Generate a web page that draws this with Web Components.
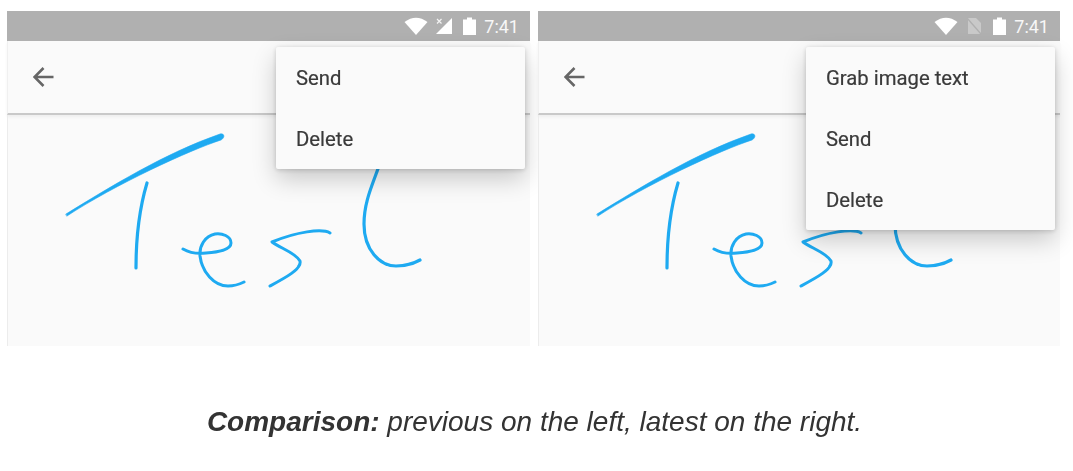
<!DOCTYPE html>
<html>
<head>
<meta charset="utf-8">
<title>Comparison</title>
<style>
  html, body { margin: 0; padding: 0; background: #fff; }
  body { width: 1073px; height: 471px; overflow: hidden; font-family: "Liberation Sans", Arial, sans-serif; }
</style>
</head>
<body>
<compare-page>
  <note-phone width="523">
    <note-menu>
      <note-item>Send</note-item>
      <note-item>Delete</note-item>
    </note-menu>
  </note-phone>
  <note-phone width="522" sim="none">
    <note-menu>
      <note-item>Grab image text</note-item>
      <note-item>Send</note-item>
      <note-item>Delete</note-item>
    </note-menu>
  </note-phone>
  <span slot="caption"><b>Comparison:</b> previous on the left, latest on the right.</span>
</compare-page>

<script>
class ComparePage extends HTMLElement {
  constructor() {
    super();
    this.attachShadow({ mode: 'open' });
    this.shadowRoot.innerHTML = `
      <style>
        :host { display: block; padding: 11px 0 0 7px; }
        .row { display: flex; gap: 8px; }
        .caption {
          margin-top: 58px;
          padding-right: 11px;
          text-align: center;
          font: italic 28px/36px "Liberation Sans", Arial, sans-serif;
          color: #333;
          filter: blur(.25px);
        }
      </style>
      <div class="row"><slot></slot></div>
      <div class="caption"><slot name="caption"></slot></div>
    `;
  }
}

const signalIcons = {
  x: `<svg width="18" height="18" viewBox="0 0 18 18">
        <path d="M1 17 L17 1 V17 Z" fill="#fff"/>
        <path d="M1 1 L7 7 M7 1 L1 7" stroke="#b0b0b0" stroke-width="4"/>
        <path d="M2 2 L6.5 6.5 M6.5 2 L2 6.5" stroke="#f4f4f4" stroke-width="1.2"/>
      </svg>`,
  none: `<svg width="18" height="18" viewBox="0 0 18 18">
        <path d="M3 1 H11 L16 6 V17 H3 Z" fill="#fff" opacity=".32"/>
        <path d="M2 1 L16 17" stroke="#b0b0b0" stroke-width="1.4"/>
      </svg>`
};

class NotePhone extends HTMLElement {
  constructor() {
    super();
    this.attachShadow({ mode: 'open' });
    const sim = this.getAttribute('sim') === 'none' ? 'none' : 'x';
    this.shadowRoot.innerHTML = `
      <style>
        :host {
          display: block;
          position: relative;
          width: ${this.getAttribute('width')}px;
          height: 335px;
          background: #fafafa;
          font-family: Roboto, "Liberation Sans", sans-serif;
          filter: blur(.55px);
        }
        .status {
          height: 30px;
          background: #b0b0b0;
          display: flex;
          align-items: center;
          justify-content: flex-end;
          padding-right: 11px;
          color: #f7f7f7;
          font-size: 18px;
        }
        .status svg { display: block; }
        .wifi { margin-right: 7px; }
        .sim { margin-right: 10px; }
        .battery { margin-right: 8px; }
        .bar {
          height: 74px;
          display: flex;
          align-items: center;
          padding-left: 25px;
          border-bottom: 2px solid #c9c9c9;
          box-shadow: 0 2px 3px rgba(0,0,0,.05);
          box-sizing: border-box;
          background: #fafafa;
          border-left: 1px solid #f0f0f0;
        }
        .canvas {
          height: 231px;
          border-left: 1px solid #ececec;
          box-sizing: border-box;
        }
        .canvas svg { display: block; }
      </style>
      <div class="status">
        <svg class="wifi" width="24" height="18" viewBox="0 0 24 18"><path d="M0.5 5 Q12 -3.5 23.5 5 L12 18 Z" fill="#fff"/></svg>
        <span class="sim">${signalIcons[sim]}</span>
        <svg class="battery" width="13" height="18" viewBox="0 0 13 18"><path d="M4 0.5 H9 V2.5 H13 V18 H0 V2.5 H4 Z" fill="#fff"/></svg>
        <span>7:41</span>
      </div>
      <div class="bar">
        <svg width="22" height="22" viewBox="0 0 22 22" fill="none" stroke="#666" stroke-width="2.6">
          <path d="M20.5 11 H1.5 M10.5 2 L1.5 11 L10.5 20"/>
        </svg>
      </div>
      <div class="canvas">
        <svg width="522" height="231" viewBox="8 115 522 231" fill="none" stroke="#1eaaf1" stroke-width="3" stroke-linecap="round" stroke-linejoin="round">
          <path d="M66 214 C110 187 165 153 220 134 C225 133 225 138 221 140 C190 150 115 184.5 67 216 Z" fill="#1eaaf1" stroke="#1eaaf1" stroke-width=".6"/>
          <path d="M147 183 C141 203 136 230 136 268" stroke-width="3.2"/>
          <path d="M183 249 C190 253 198 254 206 253 C218 252 231 250 231 243 C231 236 222 233 215 234 C205 236 199 246 200 256 C202 272 214 286 228 286 C234 286 240 284 244 282"/>
          <path d="M330 233 C322 228 296 232 272 242 C280 248 296 253 300 261 C302 269 285 278 270 286"/>
          <path d="M381 160 C374 182 364 200 364 224 C364 250 380 266 396 266 C405 266 413 264 420 260" stroke-width="3.2"/>
        </svg>
      </div>
      <slot></slot>
    `;
  }
}

class NoteMenu extends HTMLElement {
  constructor() {
    super();
    this.attachShadow({ mode: 'open' });
    this.shadowRoot.innerHTML = `
      <style>
        :host {
          display: block;
          position: absolute;
          top: 36px;
          right: 5px;
          width: 249px;
          background: #fafafa;
          border-radius: 2px;
          box-shadow: 0 10px 24px rgba(0,0,0,.2), 0 1px 5px rgba(0,0,0,.18);
        }
      </style>
      <slot></slot>
    `;
  }
}

class NoteItem extends HTMLElement {
  constructor() {
    super();
    this.attachShadow({ mode: 'open' });
    this.shadowRoot.innerHTML = `
      <style>
        :host {
          display: flex;
          align-items: center;
          height: 61px;
          padding-left: 20px;
          font-size: 20.3px;
          color: #3a3a3a;
          -webkit-text-stroke: .2px #3a3a3a;
        }
      </style>
      <slot></slot>
    `;
  }
}

customElements.define('compare-page', ComparePage);
customElements.define('note-phone', NotePhone);
customElements.define('note-menu', NoteMenu);
customElements.define('note-item', NoteItem);
</script>
</body>
</html>
